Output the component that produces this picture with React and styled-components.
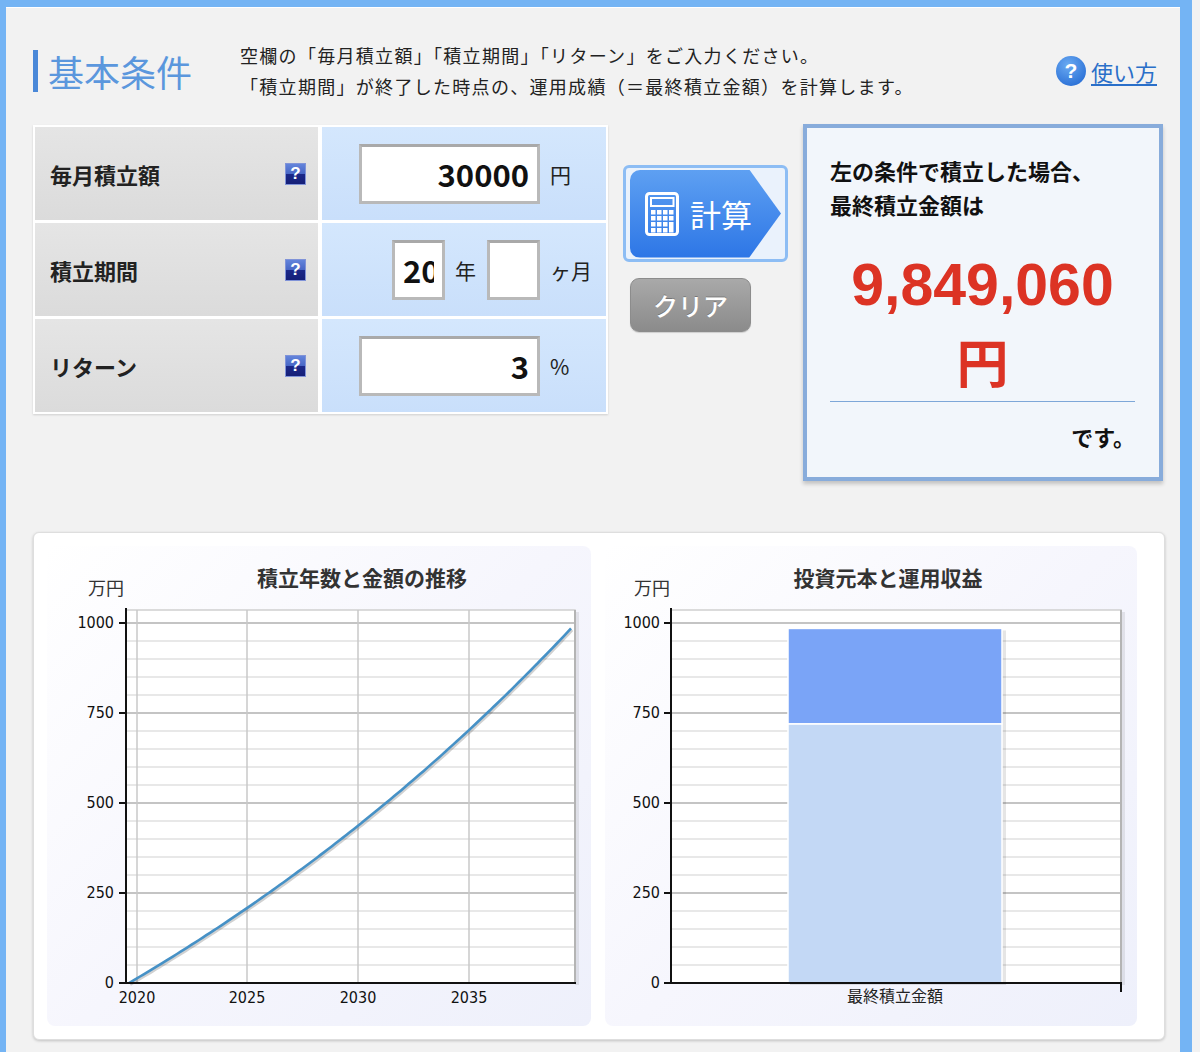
import React from 'react';
import styled, { createGlobalStyle } from 'styled-components';

const JP = `"Noto Sans CJK JP", "Noto Sans", sans-serif`;
const NUM = `"DejaVu Sans Condensed", "DejaVu Sans", sans-serif`;

const GlobalStyle = createGlobalStyle`
  html, body { margin: 0; padding: 0; background: #f2f2f2; }
  body { font-family: ${JP}; color: #222; }
  * { box-sizing: border-box; }
`;

const Frame = styled.div`
  width: 1192px;
  min-height: 1052px;
  border-style: solid;
  border-color: #74b4f4;
  border-width: 7px 12px 0 6px;
  background: #f2f2f2;
  box-shadow: inset 0 1px 0 #fff;
  padding: 33px 15px 0 27px;
`;

const Header = styled.div`
  display: flex;
  align-items: center;
  height: 62px;
`;

const Title = styled.h1`
  flex: 0 0 207px;
  margin: 0;
  height: 42px;
  border-left: 5px solid #4a88d8;
  padding-left: 10px;
  font-size: 36px;
  line-height: 42px;
  font-weight: 400;
  color: #5b97dd;
  white-space: nowrap;
`;

const Description = styled.p`
  margin: 0;
  font-size: 18px;
  letter-spacing: 1.3px;
  line-height: 31px;
  color: #222;
  white-space: nowrap;
`;

const HelpLink = styled.a`
  margin-left: auto;
  margin-right: 8px;
  display: flex;
  align-items: center;
  gap: 5px;
  font-size: 22px;
  color: #2a6fc9;
  text-decoration: none;
  span.txt { text-decoration: underline; text-underline-offset: 3px; }
`;

const RoundQ = styled.span`
  width: 30px;
  height: 30px;
  border-radius: 50%;
  background: radial-gradient(circle at 40% 30%, #6aaaf2, #2f74d8 75%);
  color: #fff;
  font-family: "Liberation Sans", sans-serif;
  font-weight: 700;
  font-size: 21px;
  display: flex;
  align-items: center;
  justify-content: center;
`;

const MainRow = styled.div`
  display: flex;
  align-items: flex-start;
  margin-top: 23px;
`;

const Table = styled.div`
  display: grid;
  grid-template-columns: 283px 284px;
  grid-auto-rows: 93px;
  gap: 3px 4px;
  padding: 2px;
  width: 575px;
  background: #fff;
  box-shadow: 0 1px 2px rgba(0, 0, 0, 0.15);
`;

const LabelCell = styled.div`
  display: flex;
  align-items: center;
  justify-content: space-between;
  padding: 0 12px 0 15px;
  background: linear-gradient(#e5e5e5, #dbdbdb);
  font-size: 22px;
  font-weight: 700;
  color: #222;
`;

const QIcon = styled.span`
  width: 21px;
  height: 22px;
  border: 1px solid #8093d8;
  background: linear-gradient(#6384db 0%, #4867c6 48%, #1b2889 52%, #151f78 100%);
  color: #fff;
  font-family: "Liberation Sans", sans-serif;
  font-weight: 700;
  font-size: 17px;
  line-height: 20px;
  text-align: center;
`;

const ValueCell = styled.div`
  display: flex;
  align-items: center;
  justify-content: flex-end;
  padding-right: 14px;
  background: linear-gradient(#d4e7fd, #c9dffb);
`;

const NumInput = styled.input`
  width: ${(p) => p.$w}px;
  height: 60px;
  border: 3px solid #b9b9b9;
  border-top-color: #a9a9a9;
  background: #fff;
  padding: 0 8px;
  font-family: ${JP};
  font-size: 31px;
  font-weight: 700;
  color: #111;
  text-align: right;
  outline: none;
`;

const Unit = styled.span`
  flex: 0 0 ${(p) => (p.$inline ? 'auto' : '42px')};
  margin: ${(p) => (p.$inline ? '0 11px 0 10px' : '0 0 0 10px')};
  font-size: 21px;
  color: #222;
  white-space: nowrap;
`;

const CalcButton = styled.button`
  margin: 40px 0 0 15px;
  width: 165px;
  height: 97px;
  border: 3px solid #8dbdf4;
  border-radius: 6px;
  background: #eaf2fc;
  padding: 2px 4px;
  cursor: pointer;
  display: flex;
  align-items: center;
`;

const CalcShape = styled.span`
  width: 155px;
  height: 88px;
  border-radius: 10px 0 0 10px;
  background: linear-gradient(#5ea0f2, #2d76e6);
  clip-path: polygon(0 0, 79% 0, 100% 50%, 79% 100%, 0 100%);
  display: flex;
  align-items: center;
  padding-left: 15px;
  gap: 11px;
  color: #fff;
  font-family: ${JP};
  font-size: 31px;
  font-weight: 400;
`;

const ClearButton = styled.button`
  margin: 16px 0 0 22px;
  width: 121px;
  height: 54px;
  border: 1px solid #8c8c8c;
  border-radius: 9px;
  background: linear-gradient(#a9a9a9, #8b8b8b);
  box-shadow: 0 1px 1px rgba(0, 0, 0, 0.15);
  color: #fff;
  font-family: ${JP};
  font-size: 25px;
  font-weight: 500;
  text-shadow: 0 -1px 0 rgba(0, 0, 0, 0.25);
  cursor: pointer;
`;

const ButtonColumn = styled.div`
  display: flex;
  flex-direction: column;
  align-items: flex-start;
`;

const ResultBox = styled.div`
  margin: -1px 0 0 15px;
  width: 360px;
  height: 357px;
  border: 4px solid #88acdb;
  background: #f2f6fb;
  box-shadow: 0 3px 4px rgba(0, 0, 0, 0.2);
  padding: 25px 24px 0 23px;
`;

const ResultLead = styled.p`
  margin: 0;
  font-size: 22px;
  font-weight: 700;
  line-height: 34px;
  color: #111;
`;

const Amount = styled.div`
  margin-top: 28px;
  text-align: center;
  font-family: "Liberation Sans", Arial, sans-serif;
  font-size: 59px;
  font-weight: 700;
  line-height: 72px;
  color: #dc3324;
`;

const AmountYen = styled.div`
  text-align: center;
  font-size: 52px;
  font-weight: 700;
  line-height: 80px;
  color: #dc3324;
  border-bottom: 1px solid #7ea7d8;
`;

const ResultTail = styled.p`
  margin: 17px 0 0;
  text-align: right;
  font-size: 22px;
  font-weight: 700;
  line-height: 34px;
  color: #111;
`;

const ChartBox = styled.div`
  margin-top: 51px;
  width: 1132px;
  height: 508px;
  background: #fff;
  border: 1px solid #dedede;
  border-radius: 6px;
  box-shadow: 0 1px 3px rgba(0, 0, 0, 0.2);
  padding: 13px;
  display: flex;
  gap: 14px;
`;

const ChartPanel = styled.div`
  width: ${(p) => p.$w}px;
  height: 480px;
  border-radius: 8px;
  background: linear-gradient(135deg, #ffffff 0%, #f6f6fd 50%, #eef0fb 100%);
  svg { display: block; }
`;

const Y0 = 437;
const yv = (v) => Y0 - 0.36 * v;
const fv = (m) => (30000 * (Math.pow(1.0025, m) - 1)) / 0.0025 / 10000;

function Grid({ x1, x2 }) {
  const lines = [];
  for (let v = 50; v <= 1000; v += 50) {
    const major = v % 250 === 0;
    lines.push(
      <line
        key={v}
        x1={x1}
        x2={x2}
        y1={yv(v)}
        y2={yv(v)}
        stroke={major ? '#c4c4c4' : '#e0e0e0'}
        strokeWidth={major ? 2 : 1.5}
      />
    );
  }
  return <g>{lines}</g>;
}

function YAxis({ x, labelX }) {
  return (
    <g>
      {[0, 250, 500, 750, 1000].map((v) => (
        <g key={v}>
          <line x1={x - 7} x2={x} y1={yv(v)} y2={yv(v)} stroke="#111" strokeWidth="2" />
          <text
            x={labelX}
            y={yv(v)}
            textAnchor="end"
            dominantBaseline="middle"
            fontFamily={NUM}
            fontSize="16"
            fill="#111"
          >
            {v}
          </text>
        </g>
      ))}
    </g>
  );
}

function LineChart() {
  const L = 79, R = 528, T = 64;
  let d = '';
  for (let m = 0; m <= 240; m += 2) {
    const x = 82 + (m * (524 - 82)) / 240;
    const y = yv(fv(m));
    d += (m === 0 ? 'M' : 'L') + x.toFixed(1) + ' ' + y.toFixed(1) + ' ';
  }
  const years = [
    [2020, 90],
    [2025, 200],
    [2030, 311],
    [2035, 422],
  ];
  return (
    <svg width="544" height="480" viewBox="0 0 544 480">
      <text x="315" y="34" textAnchor="middle" dominantBaseline="middle" fontFamily={JP} fontSize="21" fontWeight="700" fill="#333">
        積立年数と金額の推移
      </text>
      <text x="41" y="44" dominantBaseline="middle" fontFamily={JP} fontSize="18" fill="#333">
        万円
      </text>
      <rect x={R} y={T + 2} width="4" height={Y0 - T} fill="rgba(0,0,0,0.08)" />
      <rect x={L} y={T} width={R - L} height={Y0 - T} fill="#fff" stroke="#cfcfcf" strokeWidth="1.5" />
      <Grid x1={L} x2={R} />
      {years.map(([yr, x]) => (
        <line key={yr} x1={x} x2={x} y1={T} y2={Y0} stroke="#c8c8c8" strokeWidth="1.5" />
      ))}
      <line x1={R} x2={R} y1={T} y2={Y0} stroke="#b4b4b4" strokeWidth="2" />
      <path d={d} fill="none" stroke="rgba(0,0,0,0.18)" strokeWidth="3" transform="translate(1.2,1.5)" />
      <path d={d} fill="none" stroke="#4691c6" strokeWidth="2.6" />
      <line x1={L} x2={L} y1={T - 2} y2={Y0} stroke="#111" strokeWidth="2" />
      <line x1={L - 1} x2={R + 1} y1={Y0} y2={Y0} stroke="#111" strokeWidth="2" />
      <YAxis x={L} labelX={67} />
      {years.map(([yr, x]) => (
        <text key={yr} x={x} y="452" textAnchor="middle" dominantBaseline="middle" fontFamily={NUM} fontSize="16" fill="#111">
          {yr}
        </text>
      ))}
    </svg>
  );
}

function BarChart() {
  const L = 66, R = 516, T = 64;
  const bx = 183, bw = 214;
  const yP = yv(720);
  const yT = yv(984.906);
  return (
    <svg width="532" height="480" viewBox="0 0 532 480">
      <text x="283" y="34" textAnchor="middle" dominantBaseline="middle" fontFamily={JP} fontSize="21" fontWeight="700" fill="#333">
        投資元本と運用収益
      </text>
      <text x="29" y="44" dominantBaseline="middle" fontFamily={JP} fontSize="18" fill="#333">
        万円
      </text>
      <rect x={R} y={T + 2} width="4" height={Y0 - T} fill="rgba(0,0,0,0.08)" />
      <rect x={L} y={T} width={R - L} height={Y0 - T} fill="#fff" stroke="#cfcfcf" strokeWidth="1.5" />
      <Grid x1={L} x2={R} />
      <line x1={R} x2={R} y1={T} y2={Y0} stroke="#b4b4b4" strokeWidth="2" />
      <rect x={bx + 2} y={yT + 2} width={bw + 2} height={Y0 - yT} fill="rgba(0,0,0,0.1)" />
      <rect x={bx} y={yP} width={bw} height={Y0 - yP} fill="#c3d8f5" stroke="#fff" strokeWidth="1.5" />
      <rect x={bx} y={yT} width={bw} height={yP - yT} fill="#7aa4f7" stroke="#fff" strokeWidth="1.5" />
      <line x1={L} x2={L} y1={T - 2} y2={Y0} stroke="#111" strokeWidth="2" />
      <line x1={L - 1} x2={R + 1} y1={Y0} y2={Y0} stroke="#111" strokeWidth="2" />
      <line x1={R} x2={R} y1={Y0} y2={Y0 + 9} stroke="#111" strokeWidth="2" />
      <YAxis x={L} labelX={55} />
      <text x="290" y="452" textAnchor="middle" dominantBaseline="middle" fontFamily={JP} fontSize="16" fill="#222">
        最終積立金額
      </text>
    </svg>
  );
}

function CalculatorIcon() {
  const keys = [];
  const cols = [6, 12, 18, 24];
  const rows = [18, 24, 30, 36];
  rows.forEach((y, ri) => {
    cols.forEach((x, ci) => {
      if (ci === 3 && ri >= 2) return;
      keys.push(<rect key={`${ri}-${ci}`} x={x} y={y} width="4.5" height="4.5" fill="#fff" />);
    });
  });
  return (
    <svg width="34" height="44" viewBox="0 0 34 44">
      <rect x="1.5" y="1.5" width="31" height="41" rx="3" fill="none" stroke="#fff" strokeWidth="3" />
      <rect x="6" y="6" width="22.5" height="8" fill="none" stroke="#fff" strokeWidth="2" />
      {keys}
      <rect x="24" y="30" width="4.5" height="10.5" fill="#fff" />
    </svg>
  );
}

export default function App() {
  return (
    <>
      <GlobalStyle />
      <Frame>
        <Header>
          <Title>基本条件</Title>
          <Description>
            空欄の「毎月積立額」「積立期間」「リターン」をご入力ください。
            <br />
            「積立期間」が終了した時点の、運用成績（＝最終積立金額）を計算します。
          </Description>
          <HelpLink href="#">
            <RoundQ>?</RoundQ>
            <span className="txt">使い方</span>
          </HelpLink>
        </Header>

        <MainRow>
          <Table>
            <LabelCell>
              毎月積立額
              <QIcon>?</QIcon>
            </LabelCell>
            <ValueCell>
              <NumInput $w={181} defaultValue="30000" />
              <Unit>円</Unit>
            </ValueCell>

            <LabelCell>
              積立期間
              <QIcon>?</QIcon>
            </LabelCell>
            <ValueCell>
              <NumInput $w={53} defaultValue="20" />
              <Unit $inline>年</Unit>
              <NumInput $w={53} defaultValue="" />
              <Unit>ヶ月</Unit>
            </ValueCell>

            <LabelCell>
              リターン
              <QIcon>?</QIcon>
            </LabelCell>
            <ValueCell>
              <NumInput $w={181} defaultValue="3" />
              <Unit>%</Unit>
            </ValueCell>
          </Table>

          <ButtonColumn>
            <CalcButton type="button">
              <CalcShape>
                <CalculatorIcon />
                計算
              </CalcShape>
            </CalcButton>
            <ClearButton type="button">クリア</ClearButton>
          </ButtonColumn>

          <ResultBox>
            <ResultLead>
              左の条件で積立した場合、
              <br />
              最終積立金額は
            </ResultLead>
            <Amount>9,849,060</Amount>
            <AmountYen>円</AmountYen>
            <ResultTail>です。</ResultTail>
          </ResultBox>
        </MainRow>

        <ChartBox>
          <ChartPanel $w={544}>
            <LineChart />
          </ChartPanel>
          <ChartPanel $w={532}>
            <BarChart />
          </ChartPanel>
        </ChartBox>
      </Frame>
    </>
  );
}
